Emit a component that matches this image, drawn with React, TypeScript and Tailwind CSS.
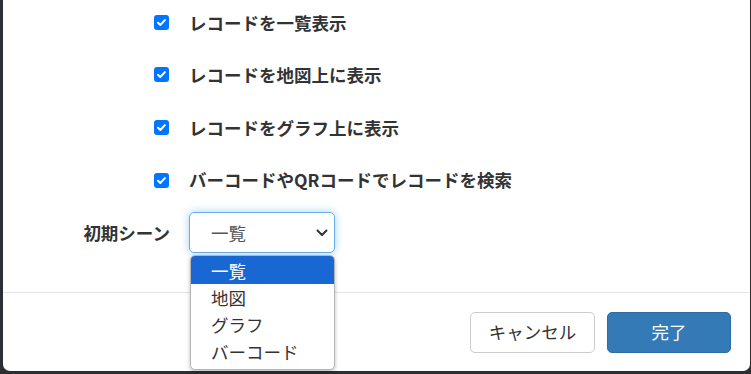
const font = { fontFamily: '"Noto Sans CJK JP", "Noto Sans", sans-serif' };

const options = [
  "レコードを一覧表示",
  "レコードを地図上に表示",
  "レコードをグラフ上に表示",
  "バーコードやQRコードでレコードを検索",
];

const scenes = ["一覧", "地図", "グラフ", "バーコード"];

function CheckBox() {
  return (
    <span className="flex h-[15px] w-[15px] items-center justify-center rounded-[3px] bg-[#0075ff]">
      <svg width="11" height="11" viewBox="0 0 12 12" fill="none">
        <path d="M2.2 6.3l2.5 2.4 5-5.3" stroke="#fff" strokeWidth="2.2" strokeLinecap="round" strokeLinejoin="round" />
      </svg>
    </span>
  );
}

export default function App() {
  return (
    <div className="h-[374px] w-[751px] overflow-hidden bg-[#2b2e33] pb-[3px] pl-[3px] pr-px" style={font}>
      <div className="flex h-full flex-col rounded-b-[7px] bg-white text-[17.5px] text-[#333]">
        {/* body */}
        <div className="-mt-[4px] flex h-[297px] flex-col border-b border-[#e5e5e5]">
          {options.map((o) => (
            <div key={o} className="flex h-[52.6px] shrink-0 items-center gap-[20px]">
              <div className="flex w-[166px] justify-end">
                <CheckBox />
              </div>
              <span className="font-bold leading-none">{o}</span>
            </div>
          ))}

          <div className="mt-[6px] flex items-start gap-[19px]">
            <div className="flex h-[41px] w-[167px] items-center justify-end font-bold">初期シーン</div>
            <div className="relative">
              <div className="flex h-[41px] w-[146px] items-center justify-between rounded-[5px] border border-[#66afe9] pl-[21px] pr-[6px] text-[#555] shadow-[0_0_8px_rgba(102,175,233,0.6)]">
                <span>一覧</span>
                <svg width="12" height="8" viewBox="0 0 12 8" fill="none">
                  <path d="M1.5 1.5l4.5 4.5 4.5-4.5" stroke="#333" strokeWidth="2" strokeLinecap="round" strokeLinejoin="round" />
                </svg>
              </div>
              {/* open list */}
              <div className="absolute left-px top-[43px] z-10 w-[145px] overflow-hidden rounded-[5px] border border-[#b5b5b5] bg-white pb-[4px] shadow-[0_2px_4px_rgba(0,0,0,0.25)]">
                {scenes.map((s, i) => (
                  <div
                    key={s}
                    className={
                      i === 0
                        ? "flex h-[28px] items-center bg-[#1967d2] pl-[20px] leading-none text-white"
                        : "flex h-[27px] items-center pl-[20px] leading-none text-[#333]"
                    }
                  >
                    {s}
                  </div>
                ))}
              </div>
            </div>
          </div>
        </div>

        {/* footer */}
        <div className="flex justify-end gap-[12px] pr-[19px] pt-[19px]">
          <button className="h-[41px] w-[125px] rounded-[5px] border border-[#ccc] bg-white text-[#333]">キャンセル</button>
          <button className="h-[41px] w-[124px] rounded-[5px] border border-[#2e6da4] bg-[#337ab7] text-white">完了</button>
        </div>
      </div>
    </div>
  );
}
